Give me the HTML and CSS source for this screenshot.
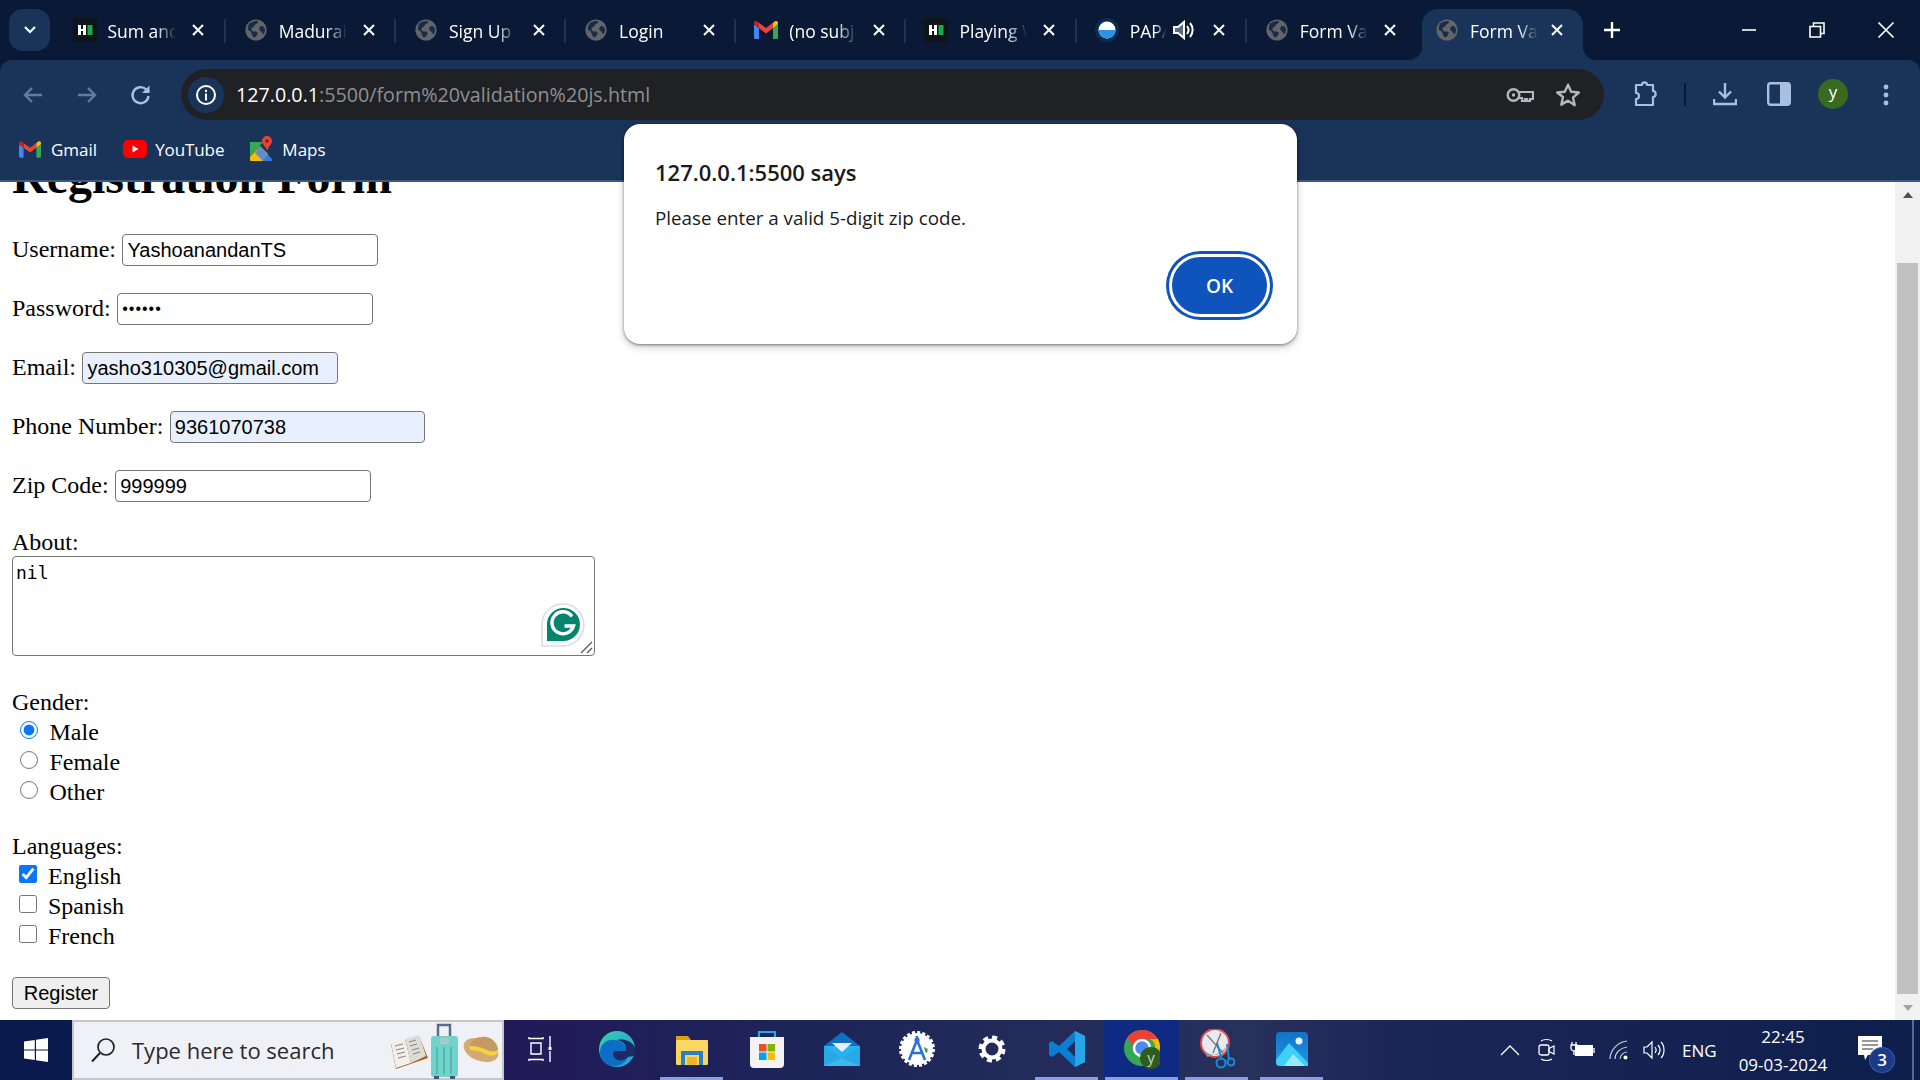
FILE: index.html
```html
<!DOCTYPE html>
<html lang="en">
<head>
    <meta charset="UTF-8">
    <meta name="viewport" content="width=device-width, initial-scale=1.0">
    <title>Form Validation</title>
    <link rel="stylesheet" href="styles.css">
</head>
<body>

    <svg class="icon-defs" width="0" height="0">
        <symbol id="globe" viewBox="-1 -1 26 26">
            <circle cx="12" cy="12" r="11.500" fill="#62666b"/>
            <path fill="#1b2b45" d="M5 5c3-2.500 7-3 9-2.500 1 1-1 3-3 3.500-1 1.500-1 3-3 3-1 1-1 2.500-.5 3.500 1.500 2 4 0 6 2 1 1.500-.5 3-1.500 4.500-1.500.5-1 1.500-2.500 1-2-2-2-4-3-6-1.500-1-3-2-3.500-3 .5-3 1-5 2-7z"/>
            <path fill="#1b2b45" d="M17 8c2-1 3.500 0 4.500 2.500.5 2 0 4.500-1 6-1.500-.5-2-2-3-3-1.500-.5-2-1.500-2-3 0-1 .5-2 1.500-2.500z"/>
        </symbol>
        <symbol id="hacker" viewBox="0 0 24 24">
            <rect width="24" height="24" fill="#0f1419"/>
            <rect x="5" y="7" width="3" height="10" fill="#fff"/>
            <rect x="10" y="7" width="3" height="10" fill="#fff"/>
            <rect x="7" y="11" width="4" height="2" fill="#fff"/>
            <rect x="14.500" y="7" width="5" height="10" fill="#1ba94c"/>
        </symbol>
        <symbol id="gmail" viewBox="0 0 24 18">
            <path fill="#4285f4" d="M0 18V3.300l5 3.900V18H1.600C.7 18 0 17.300 0 16.400z"/>
            <path fill="#34a853" d="M24 18V3.300l-5 3.900V18h3.400c.9 0 1.600-.7 1.600-1.600z"/>
            <path fill="#ea4335" d="M5 7.200 12 12.400l7-5.200V1.800L12 7 5 1.800z"/>
            <path fill="#fbbc04" d="M19 1.800 21 .3c1.300-.9 3-.1 3 1.600v1.400l-5 3.900z"/>
            <path fill="#c5221f" d="M0 1.900C0 .2 1.700-.6 3 .3l2 1.500v5.400L0 3.300z"/>
        </symbol>
        <symbol id="close-x" viewBox="0 0 14 14">
            <path d="M2 2 12 12M12 2 2 12" stroke="#fff" stroke-width="2" fill="none"/>
        </symbol>
    </svg>

    <header class="browser">
        <div class="tab-strip">
            <button class="tab-search">
                <svg width="14" height="10" viewBox="0 0 14 10"><path d="M2 2l5 5 5-5" stroke="#fff" stroke-width="2.200" fill="none"/></svg>
            </button>
            <div class="tabs">
                <div class="tab tab-first">
                    <svg class="favicon"><use href="#hacker"/></svg>
                    <span class="tab-title">Sum and Difference</span>
                    <svg class="tab-close"><use href="#close-x"/></svg>
                </div>
                <div class="tab">
                    <svg class="favicon"><use href="#globe"/></svg>
                    <span class="tab-title">Madurai Kamaraj</span>
                    <svg class="tab-close"><use href="#close-x"/></svg>
                </div>
                <div class="tab">
                    <svg class="favicon"><use href="#globe"/></svg>
                    <span class="tab-title">Sign Up</span>
                    <svg class="tab-close"><use href="#close-x"/></svg>
                </div>
                <div class="tab">
                    <svg class="favicon"><use href="#globe"/></svg>
                    <span class="tab-title">Login</span>
                    <svg class="tab-close"><use href="#close-x"/></svg>
                </div>
                <div class="tab">
                    <svg class="favicon favicon-gmail"><use href="#gmail"/></svg>
                    <span class="tab-title">(no subject)</span>
                    <svg class="tab-close"><use href="#close-x"/></svg>
                </div>
                <div class="tab">
                    <svg class="favicon"><use href="#hacker"/></svg>
                    <span class="tab-title">Playing With</span>
                    <svg class="tab-close"><use href="#close-x"/></svg>
                </div>
                <div class="tab tab-audio">
                    <svg class="favicon" viewBox="0 0 24 24">
                        <circle cx="12" cy="12" r="12" fill="#0c2c50"/>
                        <circle cx="12" cy="12" r="8.500" fill="#fff"/>
                        <path d="M3.500 12a8.500 8.500 0 0 0 17 0z" fill="#2a93e8"/>
                    </svg>
                    <span class="tab-title">PAPA Song</span>
                    <svg class="tab-speaker" viewBox="0 0 22 22">
                        <path d="M2 8h4l6-5v16l-6-5H2z" fill="none" stroke="#fff" stroke-width="2"/>
                        <path d="M2 8h4l6-5v16l-6-5H2z" fill="#fff" opacity=".35"/>
                        <path d="M15 7c2 2.500 2 5.500 0 8M18 4c3.500 4 3.500 10 0 14" fill="none" stroke="#fff" stroke-width="2"/>
                    </svg>
                    <svg class="tab-close"><use href="#close-x"/></svg>
                </div>
                <div class="tab">
                    <svg class="favicon"><use href="#globe"/></svg>
                    <span class="tab-title">Form Validation</span>
                    <svg class="tab-close"><use href="#close-x"/></svg>
                </div>
                <div class="tab tab-active">
                    <svg class="favicon"><use href="#globe"/></svg>
                    <span class="tab-title">Form Validation</span>
                    <svg class="tab-close"><use href="#close-x"/></svg>
                </div>
            </div>
            <svg class="new-tab" width="18" height="18" viewBox="0 0 18 18"><path d="M9 1v16M1 9h16" stroke="#fff" stroke-width="2.400"/></svg>
            <div class="window-controls">
                <svg width="16" height="16" viewBox="0 0 16 16"><path d="M1 8h14" stroke="#fff" stroke-width="1.600"/></svg>
                <svg width="16" height="16" viewBox="0 0 16 16"><path d="M1 4.500h10.500V15H1zM4.500 4.500V1H15v10.500h-3.500" fill="none" stroke="#fff" stroke-width="1.600"/></svg>
                <svg width="18" height="18" viewBox="0 0 18 18"><path d="M1.500 1.500l15 15M16.500 1.500l-15 15" stroke="#fff" stroke-width="1.700"/></svg>
            </div>
        </div>

        <div class="toolbar">
            <div class="nav-buttons">
                <svg width="24" height="24" viewBox="0 0 24 24"><path d="M21 12H4M11 5l-7 7 7 7" fill="none" stroke="#5f7ba3" stroke-width="2.400"/></svg>
                <svg width="24" height="24" viewBox="0 0 24 24"><path d="M3 12h17M13 5l7 7-7 7" fill="none" stroke="#5f7ba3" stroke-width="2.400"/></svg>
                <svg width="24" height="24" viewBox="0 0 24 24"><path d="M19.500 13a8 8 0 1 1-2.300-6.500L20 9" fill="none" stroke="#a9bfe0" stroke-width="2.400"/><path d="M20.500 2.500v7.500H13z" fill="#a9bfe0"/></svg>
            </div>
            <div class="omnibox">
                <div class="site-chip">
                    <svg width="22" height="22" viewBox="0 0 22 22"><circle cx="11" cy="11" r="9" fill="none" stroke="#fff" stroke-width="2"/><rect x="10" y="9.500" width="2" height="7" fill="#fff"/><rect x="10" y="5.800" width="2" height="2.200" fill="#fff"/></svg>
                </div>
                <div class="url"><span class="url-host">127.0.0.1</span>:5500/form%20validation%20js.html</div>
                <svg class="omni-icon" width="28" height="16" viewBox="0 0 28 16"><circle cx="7.500" cy="8" r="5.800" fill="none" stroke="#b4b7bb" stroke-width="2.400"/><circle cx="7.500" cy="8" r="1.700" fill="#b4b7bb"/><path d="M13 5h14v7h-3v2h-3v-2h-2v2h-3v-3h-3" fill="none" stroke="#b4b7bb" stroke-width="2.200"/></svg>
                <svg class="omni-icon" width="26" height="26" viewBox="0 0 24 24"><path d="M12 2.500l2.900 6.500 7.100.7-5.400 4.700 1.600 7L12 17.200l-6.200 3.700 1.600-7L2 9.700 9.100 9z" fill="none" stroke="#b4b7bb" stroke-width="2.200" stroke-linejoin="round"/></svg>
            </div>
            <svg class="tool-extension" width="24" height="26" viewBox="0 0 24 26"><path d="M2 4h6c0-3.500 5-3.500 5 0h6v6c3.500 0 3.500 6 0 6v8H2v-6c4 0 4-6 0-6z" fill="none" stroke="#a9bfe0" stroke-width="2.200" stroke-linejoin="round"/></svg>
            <span class="tool-divider"></span>
            <svg class="tool-download" width="24" height="24" viewBox="0 0 24 24"><path d="M12 1v14M6 9.500l6 6 6-6M1 17v5h22v-5" fill="none" stroke="#a9bfe0" stroke-width="2.400"/></svg>
            <svg class="tool-panel" width="24" height="24" viewBox="0 0 24 24"><rect x="1.200" y="1.200" width="21.600" height="21.600" rx="2.500" fill="none" stroke="#a9bfe0" stroke-width="2.400"/><rect x="13" y="1" width="10" height="22" rx="2" fill="#a9bfe0"/></svg>
            <div class="avatar">y</div>
            <svg class="tool-menu" width="8" height="24" viewBox="0 0 8 24"><circle cx="4" cy="4" r="2.400" fill="#a9bfe0"/><circle cx="4" cy="12" r="2.400" fill="#a9bfe0"/><circle cx="4" cy="20" r="2.400" fill="#a9bfe0"/></svg>
        </div>

        <div class="bookmarks">
            <div class="bookmark">
                <svg width="22" height="17"><use href="#gmail"/></svg>
                Gmail
            </div>
            <div class="bookmark bookmark-youtube">
                <svg width="24" height="18" viewBox="0 0 24 18"><rect width="24" height="18" rx="5" fill="#f00"/><path d="M9.500 5.500v7l6-3.500z" fill="#fff"/></svg>
                YouTube
            </div>
            <div class="bookmark">
                <svg width="22" height="26" viewBox="0 0 22 26">
                    <path d="M0 6h13L0 21z" fill="#34a853"/>
                    <path d="M0 21 10 10l8 8-5 7H1a1 1 0 0 1-1-1z" fill="#fbbc04"/>
                    <path d="M10 10l12 13v1a1 1 0 0 1-1 1H13l-8-8z" fill="#4285f4" opacity=".85"/>
                    <path d="M13 6h5v8z" fill="#f1f3f4"/>
                    <path d="M17 0a5 5 0 0 1 5 5c0 3-3 5-5 9-2-4-5-6-5-9a5 5 0 0 1 5-5z" fill="#ea4335"/>
                    <circle cx="17" cy="5" r="1.800" fill="#8c1c13"/>
                </svg>
                Maps
            </div>
        </div>
    </header>

    <main class="page">
        <div class="page-content">
            <h1>Registration Form</h1>
            <form>
                <div class="field">
                    <label>Username:</label>
                    <input type="text" value="YashoanandanTS">
                </div>
                <div class="field">
                    <label>Password:</label>
                    <input class="input-password" type="password" value="secret">
                </div>
                <div class="field">
                    <label>Email:</label>
                    <input class="autofilled" type="text" value="yasho310305@gmail.com">
                </div>
                <div class="field">
                    <label>Phone Number:</label>
                    <input class="autofilled" type="text" value="9361070738">
                </div>
                <div class="field">
                    <label>Zip Code:</label>
                    <input type="text" value="999999">
                </div>

                <div class="field-stacked">
                    <label>About:</label>
                    <div class="about-box">
                        <textarea>nil</textarea>
                        <svg class="grammarly" width="44" height="46" viewBox="0 0 44 46">
                            <path d="M1 45V22a21 21 0 1 1 21 23z" fill="#fff" stroke="#d9dbe6" stroke-width="1.500"/>
                            <path d="M6 40V22a16.500 16.500 0 1 1 16.500 18z" fill="#04836f"/>
                            <path d="M31 15.500a11 11 0 1 0 1.500 9.500h-9" fill="none" stroke="#fff" stroke-width="3.400"/>
                        </svg>
                        <svg class="resize-grip" width="13" height="13" viewBox="0 0 13 13">
                            <path d="M1 12 12 1M7 12l5-5" stroke="#555" stroke-width="1.300"/>
                        </svg>
                    </div>
                </div>

                <div class="group">
                    <div class="group-label">Gender:</div>
                    <label class="option"><input type="radio" name="gender" checked>Male</label>
                    <label class="option"><input type="radio" name="gender">Female</label>
                    <label class="option"><input type="radio" name="gender">Other</label>
                </div>

                <div class="group">
                    <div class="group-label">Languages:</div>
                    <label class="option option-check"><input type="checkbox" checked>English</label>
                    <label class="option option-check"><input type="checkbox">Spanish</label>
                    <label class="option option-check"><input type="checkbox">French</label>
                </div>

                <button type="button" class="register">Register</button>
            </form>
        </div>
        <div class="scrollbar">
            <div class="scroll-arrow scroll-up"></div>
            <div class="scroll-track"><div class="scroll-thumb"></div></div>
            <div class="scroll-arrow scroll-down"></div>
        </div>
    </main>

    <footer class="taskbar">
        <div class="start">
            <svg width="24" height="24" viewBox="0 0 24 24"><path d="M0 3.400l10.800-1.500v9.500H0zM12 1.700 24 0v11.400H12zM0 12.600h10.800v9.500L0 20.600zM12 12.600h12V24l-12-1.700z" fill="#fff"/></svg>
        </div>
        <div class="search">
            <svg width="26" height="26" viewBox="0 0 26 26"><circle cx="16" cy="10" r="8" fill="none" stroke="#222" stroke-width="1.700"/><path d="M10 16 2 24.500" stroke="#222" stroke-width="2"/></svg>
            <span class="search-text">Type here to search</span>
            <svg class="doodle" width="115" height="58" viewBox="0 0 115 58">
                <path d="M3 23 31 15 40 37 8 48z" fill="#a8641f"/>
                <path d="M3 22 17 18 23 42 8 47z" fill="#f1efe8"/>
                <path d="M17 18 31 14 38 35 23 42z" fill="#dedcd5"/>
                <path d="M7 25l8-2M8 29l8-2M9 33l8-2M10 37l8-2M21 21l7-2M22 25l7-2M24 29l7-2M25 33l7-2" stroke="#8d8b85" stroke-width="1.200"/>
                <path d="M50 15V4h12v11" fill="none" stroke="#5d6b88" stroke-width="2.500"/>
                <rect x="43" y="15" width="27" height="41" rx="3" fill="#6fd3cc"/>
                <rect x="52" y="17" width="9" height="6" fill="#a9c9c6"/>
                <path d="M49 26v27M56 26v27M63 26v27" stroke="#4aa8a4" stroke-width="1.300"/>
                <rect x="46" y="55" width="5" height="3" fill="#4a5670"/>
                <rect x="62" y="55" width="5" height="3" fill="#4a5670"/>
                <ellipse cx="93" cy="29" rx="18" ry="11" fill="#d3ab72" transform="rotate(20 93 29)"/>
                <path d="M82 25c2-7 9-10 16-9 7 1 12 7 12 13-4 2-8 1-12-1-5-2-10-3-16-3z" fill="#c59a5e"/>
                <path d="M81 25c6 0 12 1 17 4 4 2 8 2 12 0l-1 4c-4 2-8 2-12 0-5-3-10-4-15-4z" fill="#f5d33f"/>
            </svg>
        </div>
        <div class="task-slot task-view">
            <svg width="26" height="26" viewBox="0 0 26 26"><path d="M1 1v1.500h14V1M3 7h10v11H3zM1 25v-1.500h14V25M22 0v11M22 15v11" fill="none" stroke="#fff" stroke-width="1.400"/><rect x="20.500" y="11" width="3" height="3" fill="#fff"/></svg>
        </div>
        <div class="task-slot">
            <svg width="36" height="36" viewBox="0 0 36 36">
                <defs>
                    <linearGradient id="edge-a" x1="0" y1="0" x2="1" y2="1"><stop offset="0" stop-color="#36d0a6"/><stop offset="1" stop-color="#1b9de2"/></linearGradient>
                </defs>
                <circle cx="18" cy="18" r="18" fill="url(#edge-a)"/>
                <path d="M1 22C1 12 9 8 16 9c8 1 12 6 11 11H17c-3 0-3 3-1 5 3 3 9 3 13 1-3 6-9 10-15 9C6 34 1 29 1 22z" fill="#0c6ec5"/>
                <path d="M29 26c-4 4-11 5-14 0-2-3-1-6 2-6h10c1-5-2-10-9-11 8-2 19 2 19 13 0 1-1 3-8 4z" fill="#1e2a66"/>
            </svg>
        </div>
        <div class="task-slot task-open">
            <svg width="32" height="32" viewBox="0 0 32 32">
                <path d="M0 3h12l3 4h17v3H0z" fill="#d9a114"/>
                <rect y="7" width="32" height="25" rx="1.500" fill="#fbd661"/>
                <path d="M5 32V18h22v14h-4V22H9v10z" fill="#2a7ec7"/>
                <rect x="11" y="24" width="10" height="8" fill="#f0b429"/>
            </svg>
        </div>
        <div class="task-slot">
            <svg width="36" height="38" viewBox="0 0 36 38">
                <path d="M10 7V2h16v5" fill="none" stroke="#2aa7e0" stroke-width="2.200"/>
                <path d="M1 7h34v27a4 4 0 0 1-4 4H5a4 4 0 0 1-4-4z" fill="#f3f3f3"/>
                <rect x="10" y="14" width="7.500" height="7.500" fill="#e9501f"/>
                <rect x="18.500" y="14" width="7.500" height="7.500" fill="#7db700"/>
                <rect x="10" y="22.500" width="7.500" height="7.500" fill="#00a3ee"/>
                <rect x="18.500" y="22.500" width="7.500" height="7.500" fill="#fdb900"/>
            </svg>
        </div>
        <div class="task-slot">
            <svg width="36" height="34" viewBox="0 0 36 34">
                <path d="M18 0 36 14v20H0V14z" fill="#0f6fc0"/>
                <path d="M0 14h36v20H0z" fill="#28b3ef"/>
                <path d="M8 11h20l-10 9z" fill="#e8eef3"/>
                <path d="M0 14l18 12 18-12v20H0z" fill="#27a9e8"/>
                <path d="M18 26 36 34H0z" fill="#48c6f4" opacity=".6"/>
            </svg>
        </div>
        <div class="task-slot">
            <svg width="36" height="38" viewBox="0 0 36 38">
                <circle cx="18" cy="19" r="16" fill="#fff" stroke="#fff" stroke-width="4" stroke-dasharray="3 2"/>
                <path d="M18 6v4M10 30 18 10l8 20M13 23h10" fill="none" stroke="#2f6fd8" stroke-width="2.600"/>
                <circle cx="18" cy="10" r="2.600" fill="#2f6fd8"/>
                <path d="M25 17l4 2-1 4-2-1z" fill="#3ca55c"/>
            </svg>
        </div>
        <div class="task-slot">
            <svg width="28" height="30" viewBox="0 0 28 30">
                <circle cx="14" cy="15" r="8.500" fill="none" stroke="#fff" stroke-width="4"/>
                <circle cx="14" cy="15" r="11.500" fill="none" stroke="#fff" stroke-width="4" stroke-dasharray="5 4"/>
            </svg>
        </div>
        <div class="task-slot task-open">
            <svg width="36" height="36" viewBox="0 0 36 36">
                <path d="M26 0 36 5v26l-10 5-16-15-7 5-3-2V12l3-2 7 5zm0 10-8 8 8 8z" fill="#0a7fd1"/>
                <path d="M26 0l10 5v26l-10 5z" fill="#28a4ea"/>
            </svg>
        </div>
        <div class="task-slot task-active">
            <svg width="36" height="40" viewBox="0 0 36 40">
                <circle cx="18" cy="19" r="18" fill="#34a853"/>
                <path d="M18 1a18 18 0 0 1 16 9H18a9 9 0 0 0-9 7L3 9a18 18 0 0 1 15-8z" fill="#ea4335"/>
                <path d="M34 10a18 18 0 0 1-13 26l8-12a9 9 0 0 0-3-14z" fill="#fbbc04"/>
                <circle cx="18" cy="19" r="8" fill="#4a8bf5" stroke="#fff" stroke-width="2.500"/>
                <circle cx="27" cy="29" r="11" fill="#2f5b1f"/>
                <text x="27" y="34" text-anchor="middle" class="chrome-badge">y</text>
            </svg>
        </div>
        <div class="task-slot task-open">
            <svg width="36" height="40" viewBox="0 0 36 40">
                <circle cx="16" cy="14" r="14" fill="#e8eaed" stroke="#e2474d" stroke-width="2"/>
                <path d="M6 22a14 14 0 0 0 22-4l-8 6-12 4z" fill="#8e96a8"/>
                <path d="M8 6l16 18M22 4 14 24" stroke="#7a7f88" stroke-width="1.500"/>
                <circle cx="22" cy="34" r="4.500" fill="none" stroke="#1688d8" stroke-width="2.200"/>
                <circle cx="32" cy="33" r="3.500" fill="none" stroke="#1688d8" stroke-width="2.200"/>
                <path d="M18 14l5 17M28 15l2 15" stroke="#1688d8" stroke-width="2"/>
            </svg>
        </div>
        <div class="task-slot task-open">
            <svg width="32" height="34" viewBox="0 0 32 34">
                <defs>
                    <linearGradient id="photos-bg" x1="0" y1="0" x2="0" y2="1"><stop offset="0" stop-color="#1172c6"/><stop offset="1" stop-color="#1f9be8"/></linearGradient>
                </defs>
                <rect width="32" height="34" rx="4" fill="url(#photos-bg)"/>
                <circle cx="23" cy="9" r="3.500" fill="#e9f3fb"/>
                <path d="M0 28 13 11l19 20v3H4a4 4 0 0 1-4-4z" fill="#3ed0f5"/>
                <path d="M8 34 17 22l12 12z" fill="#9ae8fb"/>
            </svg>
        </div>
        <div class="tray">
            <svg class="tray-chevron" width="20" height="12" viewBox="0 0 20 12"><path d="M1 11 10 2l9 9" fill="none" stroke="#fff" stroke-width="1.300"/></svg>
            <svg class="tray-meet" width="18" height="24" viewBox="0 0 18 24"><rect x="1" y="7" width="10" height="10" rx="2" fill="none" stroke="#fff" stroke-width="1.300"/><path d="M11 10.500l5-2.500v8l-5-2.500zM3 3c3-2 8-2 11 0M3 21c3 2 8 2 11 0" fill="none" stroke="#fff" stroke-width="1.200"/></svg>
            <svg class="tray-battery" width="26" height="18" viewBox="0 0 26 18"><rect x="6" y="4" width="18" height="11" fill="#fff"/><path d="M25 7v5M3 1v3M7 1v3M2 4h6v3a3 3 0 0 1-6 0zM5 10v4" fill="none" stroke="#fff" stroke-width="1.300"/></svg>
            <svg class="tray-wifi" width="20" height="20" viewBox="0 0 20 20"><path d="M1 19C1 11 8 2 18 1M6 19c0-6 5-11 12-12M11 19c0-3 3-7 7-7" fill="none" stroke="#c5ccd8" stroke-width="1.200"/><circle cx="16.500" cy="17.500" r="2" fill="#fff"/></svg>
            <svg class="tray-volume" width="22" height="20" viewBox="0 0 22 20"><path d="M1 7h3l5-5v16l-5-5H1z" fill="none" stroke="#fff" stroke-width="1.200"/><path d="M12 7c1.500 2 1.500 4 0 6M15 5c2.500 3 2.500 7 0 10M18 2c4 4 4 12 0 16" fill="none" stroke="#fff" stroke-width="1.200"/></svg>
            <span class="tray-lang">ENG</span>
            <div class="clock">
                <span>22:45</span>
                <span>09-03-2024</span>
            </div>
            <div class="notify">
                <svg width="24" height="24" viewBox="0 0 24 24"><path d="M0 0h24v19H10l-3 5-1-5H0z" fill="#fff"/><path d="M4 5h16M4 9h16M4 13h11" stroke="#333" stroke-width="1.200"/></svg>
                <span class="notify-badge">3</span>
            </div>
            <span class="show-desktop"></span>
        </div>
    </footer>

    <div class="alert">
        <div class="alert-title">127.0.0.1:5500 says</div>
        <div class="alert-message">Please enter a valid 5-digit zip code.</div>
        <div class="alert-actions">
            <button class="alert-ok">OK</button>
        </div>
    </div>

</body>
</html>
```

FILE: styles.css
```css
* {
    box-sizing: border-box;
}
body {
    margin: 0;
    height: 100vh;
    position: relative;
    overflow: hidden;
    display: flex;
    flex-direction: column;
    background-color: white;
    font-family: "Liberation Serif", serif;
}
.icon-defs {
    position: absolute;
}
svg {
    display: block;
    flex: none;
}

/* browser chrome */
.browser {
    background-color: #0a1a36;
    font-family: "Open Sans", sans-serif;
    color: white;
    flex: none;
}
.tab-strip {
    height: 60px;
    display: flex;
    align-items: flex-start;
    padding-left: 9px;
}
.tab-search {
    width: 41px;
    height: 42px;
    margin-top: 9px;
    background-color: #1a3459;
    border: none;
    border-radius: 14px;
    display: flex;
    align-items: center;
    justify-content: center;
    padding: 0;
}
.tabs {
    display: flex;
    margin-left: 5.500px;
    margin-top: 9px;
}
.tab {
    width: 170.200px;
    height: 51px;
    padding: 0 0 9px 18px;
    display: flex;
    align-items: center;
    position: relative;
    font-size: 17.500px;
}
.tab::after {
    content: "";
    position: absolute;
    right: 0;
    top: 10px;
    width: 2px;
    height: 24px;
    background-color: #1a3459;
}
.tab:nth-last-child(2)::after,
.tab-active::after {
    display: none;
}
.tab-first {
    padding-left: 17px;
}
.favicon {
    width: 24px;
    height: 24px;
}
.favicon-gmail {
    height: 18px;
}
.tab-title {
    margin-left: 11px;
    margin-top: 2px;
    width: 68px;
    white-space: nowrap;
    overflow: hidden;
    -webkit-mask-image: linear-gradient(to right, black 70%, transparent 100%);
    mask-image: linear-gradient(to right, black 70%, transparent 100%);
}
.tab-close {
    width: 14px;
    height: 14px;
    margin-left: 15px;
}
.tab-speaker {
    width: 22px;
    height: 22px;
    margin-left: 6px;
}
.tab-audio .tab-title {
    width: 36px;
}
.tab-audio .tab-close {
    margin-left: 18px;
}
.tab-active {
    background-color: #1a3459;
    border-radius: 16px 16px 0 0;
    margin-left: 5px;
    width: 161px;
    padding-left: 13px;
}
.tab-active .tab-close {
    margin-left: 12px;
}
.tab-active::before {
    content: "";
    position: absolute;
    left: -14px;
    right: -14px;
    bottom: 0;
    height: 14px;
    background:
        radial-gradient(circle at 0 0, transparent 14px, #1a3459 14.500px) left / 14px 14px no-repeat,
        radial-gradient(circle at 100% 0, transparent 14px, #1a3459 14.500px) right / 14px 14px no-repeat;
}
.new-tab {
    margin-left: 20px;
    margin-top: 21px;
}
.window-controls {
    margin-left: auto;
    height: 60px;
    padding-right: 25.500px;
    display: flex;
    align-items: center;
    gap: 52px;
}

.toolbar {
    height: 60px;
    padding-top: 9px;
    background-color: #1a3459;
    border-radius: 12px 12px 0 0;
    display: flex;
    align-items: flex-start;
}
.nav-buttons {
    height: 51px;
    padding-left: 21px;
    display: flex;
    align-items: center;
    gap: 30px;
}
.omnibox {
    width: 1423px;
    height: 51px;
    margin-left: 28px;
    padding: 0 23px 0 7px;
    background-color: #202124;
    border-radius: 26px;
    display: flex;
    align-items: center;
    gap: 21px;
}
.site-chip {
    width: 36px;
    height: 36px;
    background-color: #1a3459;
    border-radius: 18px;
    display: flex;
    align-items: center;
    justify-content: center;
}
.url {
    flex: 1;
    margin-left: -9px;
    font-size: 19.700px;
    color: #8d9094;
    white-space: nowrap;
}
.url-host {
    color: white;
}
.tool-extension {
    margin: 12px 0 0 30px;
}
.tool-divider {
    width: 2px;
    height: 23px;
    margin: 14px 0 0 26px;
    background-color: #0a1a36;
}
.tool-download {
    margin: 13px 0 0 27px;
}
.tool-panel {
    margin: 13px 0 0 30px;
}
.avatar {
    width: 30px;
    height: 30px;
    margin: 10px 0 0 27px;
    border-radius: 50%;
    background-color: #386a1f;
    text-align: center;
    font-size: 17px;
    line-height: 26px;
}
.tool-menu {
    margin: 14px 0 0 34px;
}

.bookmarks {
    height: 62px;
    padding: 0 0 2px 19px;
    background-color: #1a3459;
    border-bottom: 2px solid #3a5a80;
    display: flex;
    align-items: center;
    gap: 26px;
    font-size: 17px;
}
.bookmark {
    display: flex;
    align-items: center;
    gap: 10px;
}
.bookmark-youtube {
    gap: 8px;
    letter-spacing: -0.1px;
}

/* page */
.page {
    flex: 1;
    min-height: 0;
    display: flex;
    overflow: hidden;
}
.page-content {
    flex: 1;
    padding-left: 12px;
    font-size: 24px;
}
h1 {
    margin: -33px 0 30px;
    font-size: 48px;
    line-height: 55px;
    font-weight: bold;
}
.field {
    height: 32px;
    margin-bottom: 27px;
    line-height: 32px;
    display: flex;
    align-items: center;
    gap: 6.500px;
}
.field label {
    padding-bottom: 2px;
}
.field input {
    width: 255.500px;
    height: 32px;
    padding: 1px 4px;
    font-family: "Liberation Sans", sans-serif;
    font-size: 20px;
    color: black;
    background-color: white;
    border: 1.500px solid #767676;
    border-radius: 4px;
}
.field input.input-password {
    letter-spacing: 1px;
    font-size: 16px;
}
.field input.autofilled {
    background-color: #e8f0fe;
}
.field-stacked {
    margin-top: 26px;
}
.field-stacked label {
    display: block;
    line-height: 27px;
}
.about-box {
    position: relative;
    width: 583px;
    height: 100px;
}
textarea {
    display: block;
    width: 583px;
    height: 100px;
    padding: 5px 3px;
    font-family: "DejaVu Sans Mono", monospace;
    font-size: 18px;
    border: 1.500px solid #767676;
    border-radius: 4px;
    outline: none;
    resize: none;
}
.grammarly {
    position: absolute;
    left: 529px;
    top: 45px;
}
.resize-grip {
    position: absolute;
    right: 2px;
    bottom: 2px;
}
.group {
    margin-top: 33px;
    line-height: 27px;
}
.group-label {
    margin-bottom: 1px;
}
.option {
    height: 30px;
    display: flex;
    align-items: center;
}
.option input {
    width: 18px;
    height: 18px;
    margin: -4px 11.500px 0 8px;
    accent-color: #0b75ff;
}
.option-check input {
    margin-left: 7px;
    margin-right: 11px;
}
.group + .group {
    margin-top: 26px;
}
.register {
    display: block;
    width: 98px;
    height: 32px;
    margin-top: 26px;
    padding: 0;
    font-family: "Liberation Sans", sans-serif;
    font-size: 20px;
    color: black;
    background-color: #efefef;
    border: 1.500px solid #767676;
    border-radius: 4px;
}
.scrollbar {
    width: 25px;
    background-color: #f1f1f1;
    display: flex;
    flex-direction: column;
}
.scroll-arrow {
    height: 25px;
    display: flex;
    align-items: center;
    justify-content: center;
}
.scroll-arrow::before {
    content: "";
    border-left: 5.500px solid transparent;
    border-right: 5.500px solid transparent;
}
.scroll-up::before {
    border-bottom: 6px solid #505050;
}
.scroll-down::before {
    border-top: 6px solid #a3a3a3;
}
.scroll-track {
    flex: 1;
    padding-top: 56px;
}
.scroll-thumb {
    width: 21px;
    height: 731px;
    margin-left: 2px;
    background-color: #c1c1c1;
}

/* taskbar */
.taskbar {
    height: 60px;
    flex: none;
    display: flex;
    color: white;
    font-family: "Open Sans", sans-serif;
    background: linear-gradient(to right, #0a1a4c 0, #0a1a4c 72px, #221a58 510px, #1d2558 800px, #28305c 1250px, #1b2658 1400px, #0e1f4c 1920px);
}
.start {
    width: 72px;
    display: flex;
    align-items: center;
    justify-content: center;
}
.search {
    width: 432px;
    padding-left: 16px;
    background-color: #f0f1f6;
    border: 2px solid #c6c6cc;
    display: flex;
    align-items: center;
    color: #2a2a2a;
    font-size: 22px;
}
.search-text {
    margin-left: 16px;
    white-space: nowrap;
}
.doodle {
    margin-left: auto;
    margin-right: -1px;
}
.task-slot {
    width: 75px;
    position: relative;
    display: flex;
    align-items: center;
    justify-content: center;
    padding-bottom: 2px;
}
.task-view {
    width: 74px;
    margin-right: 1px;
}
.task-open::after {
    content: "";
    position: absolute;
    left: 6px;
    right: 6px;
    bottom: 0;
    height: 3px;
    background-color: #8b9fe0;
}
.task-active {
    background-color: #0f2a82;
}
.task-active::after {
    content: "";
    position: absolute;
    left: 1px;
    right: 1px;
    bottom: 0;
    height: 3px;
    background-color: #8b9fe0;
}
.chrome-badge {
    font-family: "Open Sans", sans-serif;
    font-size: 15px;
    fill: #c9d6bd;
}
.tray {
    flex: 1;
    display: flex;
    align-items: center;
    font-size: 17px;
}
.tray-chevron {
    margin-left: 171px;
}
.tray-meet {
    margin-left: 18px;
}
.tray-battery {
    margin-left: 13px;
}
.tray-wifi {
    margin-left: 14px;
}
.tray-volume {
    margin-left: 14px;
}
.tray-lang {
    margin-left: 17px;
    width: 34px;
    white-space: nowrap;
}
.clock {
    margin-left: 20px;
    width: 94px;
    display: flex;
    flex-direction: column;
    align-items: center;
    gap: 5px;
    line-height: 23px;
    white-space: nowrap;
}
.notify {
    margin-left: 28px;
    position: relative;
    width: 24px;
    height: 24px;
    margin-top: -4px;
}
.notify-badge {
    position: absolute;
    left: 12px;
    top: 12px;
    width: 24px;
    height: 24px;
    border-radius: 50%;
    background-color: #1c3a8a;
    box-shadow: 0 0 0 1px #3a5aa8;
    font-size: 17px;
    font-weight: 600;
    line-height: 24px;
    text-align: center;
}
.show-desktop {
    width: 2px;
    height: 60px;
    margin-left: 30px;
    background-color: #5a6a8a;
}

/* alert dialog */
.alert {
    position: absolute;
    left: 624px;
    top: 124px;
    width: 673px;
    height: 220px;
    padding: 32px 20px 0 31px;
    background-color: white;
    border-radius: 16px;
    box-shadow: 0 1px 3px rgba(0, 0, 0, 0.45), 0 3px 8px rgba(0, 0, 0, 0.2);
    font-family: "Open Sans", sans-serif;
    color: #1a1a1a;
}
.alert-title {
    font-size: 22px;
    font-weight: 600;
    line-height: 32px;
}
.alert-message {
    margin-top: 18px;
    font-size: 18.800px;
    line-height: 24px;
}
.alert-actions {
    display: flex;
    justify-content: flex-end;
    margin-top: 24px;
    margin-right: 7px;
}
.alert-ok {
    width: 101px;
    height: 63px;
    padding: 0;
    border: 3px solid white;
    border-radius: 32px;
    background-color: #0f53bd;
    color: white;
    font-family: "Open Sans", sans-serif;
    font-size: 19px;
    font-weight: 600;
    box-shadow: 0 0 0 3px #0f53bd;
}
```
